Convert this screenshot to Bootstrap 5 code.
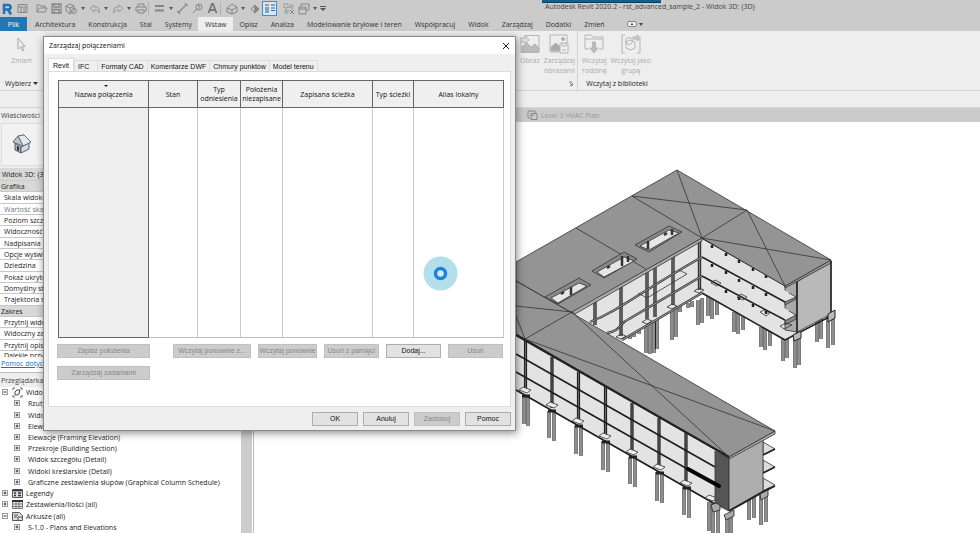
<!DOCTYPE html>
<html lang="pl">
<head>
<meta charset="utf-8">
<meta name="viewport" content="width=device-width, initial-scale=1">
<title>Autodesk Revit 2020.2</title>
<link href="https://cdn.jsdelivr.net/npm/bootstrap@5.3.0/dist/css/bootstrap.min.css" rel="stylesheet">
<style>
body{font:7px/9px "Open Sans","Noto Sans",sans-serif;color:#222;background:#fefefe;height:100vh;overflow:hidden}
button,a{font:inherit;color:inherit}
svg{display:block}
.plain{border:0;background:none;padding:0}
.ic{width:15px;height:15px;display:flex;align-items:center;justify-content:center;flex:none}
.ic svg,.ar svg{fill:none;stroke:#858585;stroke-width:1}
.ar{width:8px;height:15px;display:flex;align-items:center;justify-content:center;flex:none}
.ar svg{fill:#555;stroke:none}
.divider{width:4px;height:13px;border-left:1px solid #b2b2b2;flex:none}
.titlebar{background:#cbcbcb;height:17px}
.apptitle{left:545px;top:2px;color:#444}
.ribtabs{background:#cbcbcb;height:14px}
.ribtabs a{text-decoration:none;padding:3px 6px 2px 7px;color:#333;white-space:nowrap}
.ribtabs a.file{background:#1f77b8;color:#fff;width:27px;text-align:center;padding:3px 0;margin-right:1px}
.ribtabs a.on{background:#eee}
.ribbon{background:#eee;height:60px;border-bottom:1px solid #d3d3d3}
.ribbon .tool{color:#aaa;line-height:10px;white-space:nowrap}
.tool svg{fill:none;stroke:#b5b5b5;margin:3px auto 2px}
.pick{width:43px;padding-bottom:2px}
.linkgrp{width:535px;border-right:1px solid #d3d3d3;gap:4px;padding-right:2px}
.loadgrp{width:78px;padding-bottom:2px}
.optbar{background:#eee;height:17px;border-bottom:1px solid #d6d6d6}
.side{width:254px;border-right:1px solid #bbb;background:#fff}
.sidehead{height:14px;background:#eee;padding:3px 1px;color:#444}
.typebox{height:46px;background:#eee;padding:1px}
.typebox>div{border:1px solid #ddd;background:#f2f2f2;height:43px;padding:10px}
.typename{height:13px;background:#d9d9d9;padding:2px;border-bottom:1px solid #ccc}
.props{height:170px;display:grid;grid-auto-rows:1fr}
.props>div{padding:1px 4px 0;border-bottom:1px solid #c8c8c8;white-space:nowrap}
.props>.cat{background:#d8d8d8;padding-left:1px}
.cutrow{height:6px;overflow:hidden;padding:0 4px}
.helprow{height:16px;padding:2px 1px;border-bottom:1px solid #bbb}
.helprow a{color:#0a78c8}
.tree{height:146px;display:grid;grid-auto-rows:1fr}
.tree>div{display:flex;align-items:center;white-space:nowrap;min-height:0}
.tree .lv0{padding-left:2px;gap:3px}
.tree .lv1{padding-left:14px;gap:6px}
.tree svg{flex:none}
.track{width:11px;background:#ccc;margin-right:1px}
.viewtab{height:14px;background:#cbcbcb;color:#999;padding-left:273px;gap:3px}
.drawing{width:726px;height:411px}
.dlg{left:43px;top:36px;width:473px;max-width:100vw;background:#efefef;border:1px solid #8a8a8a;box-shadow:1px 2px 8px rgba(0,0,0,.45)}
.dlgtitle{height:17px;background:#fff;padding:0 5px;color:#111}
.dlgtabs,.pb{font-family:"Liberation Sans",Arial,sans-serif}
.dlgtabs{padding:4px 4px 0;height:17px}
.dlgtabs button{border:1px solid #ddd;border-bottom:0;background:#efefef;margin:2px 0 0 0;padding:0 3px;height:11px;color:#111}
.dlgtabs button+button+button{border-left:0}
.dlgtabs button.on{background:#fff;margin-top:0;height:13px}
.page{background:#fff;border:1px solid #dcdcdc;margin:0 4px;padding:8px 7px 26px 8px}
.links{table-layout:fixed;width:446px;border-collapse:collapse;color:#111;text-align:center;margin:0 0 6px 1px;border:1px solid #bbb}
.links th{height:27px;padding:0;border:1px solid #666;background:#efefef;font-weight:400}
.links td{height:230px;border-right:1px solid #ccc;border-bottom:1px solid #bbb}
.links td:first-child{background:#efefef;border:1px solid #666;border-top:0}
.push{display:grid;grid-template-columns:93px 1fr;column-gap:23px}
.row2{display:grid;grid-template-columns:78px 59px 55px 55px 55px;column-gap:7px}
.pb{height:14px;padding:0;border:1px solid #adadad;background:#e2e2e2;color:#111;line-height:10px;white-space:nowrap}
.pb:disabled{background:#ccc;border-color:#bfbfbf;color:#888}
.dlgfoot{padding:5px 4px 4px;gap:5px}
.dlgfoot .pb{width:46px}
.busy{left:423px;top:256px}
.strip{left:542px;top:0;width:119px;height:3px;background:#0d6196;border-bottom:1px solid #123a55}
</style>
<script src="https://cdn.jsdelivr.net/npm/bootstrap@5.3.0/dist/js/bootstrap.bundle.min.js"></script>
</head>
<body class="d-flex flex-column position-relative">
<header class="flex-shrink-0">
<div class="titlebar d-flex align-items-center position-relative">
<button class="plain ic" aria-label="Revit"><svg width="13" height="14"><path d="M3 12V3h4c3.500 0 3.500 4.500 0 4.500H4M7 7.500l3 5" stroke="#2270b5" stroke-width="2.500"/></svg></button>
<button class="plain ic me-1" aria-label="Strona główna"><svg width="11" height="11"><path d="M1 1.500h9v8H1zM1 4h9M4 4v5.500M6 6h3M6 8h3"/></svg></button>
<button class="plain ic" aria-label="Otwórz"><svg width="12" height="11"><path d="M1 9V2h3l1 1h4v2M1 9l2.500-4H11L9 9z"/></svg></button>
<button class="plain ic" aria-label="Zapisz"><svg width="11" height="11"><path d="M1 1h9v9H1zM3 1v3h5V1M3 10V6.500h5V10" stroke-width="1.300"/></svg></button>
<button class="plain ic" aria-label="Synchronizuj"><svg width="13" height="12"><path d="M1 3l4-2 4 2v5l-4 3-4-3zM1 3l4 2 4-2M5 5v6"/><circle cx="9" cy="8" r="2.500"/></svg></button>
<button class="plain ar" aria-label="Więcej"><svg width="4" height="3"><path d="M0 0h4L2 3z"/></svg></button>
<button class="plain ic" aria-label="Cofnij"><svg width="12" height="10"><path d="M5 1L1 4.500 5 8V6h2c3 0 3 2 3 3 1-3 0-6-3-6H5z" stroke="#999"/></svg></button>
<button class="plain ar" aria-label="Więcej"><svg width="4" height="3"><path d="M0 0h4L2 3z"/></svg></button>
<button class="plain ic" aria-label="Ponów"><svg width="12" height="10"><path d="M7 1l4 3.500L7 8V6H5C2 6 2 8 2 9 1 6 2 3 5 3h2z" stroke="#999"/></svg></button>
<button class="plain ar" aria-label="Więcej"><svg width="4" height="3"><path d="M0 0h4L2 3z"/></svg></button>
<button class="plain ic" aria-label="Drukuj"><svg width="12" height="11"><path d="M3 4V1h6v3M3 8H1V4h10v4H9M3 7h6v3H3z"/></svg></button>
<span class="divider"></span>
<button class="plain ic" aria-label="Zmierz"><svg width="11" height="9"><path d="M1 2h9M1 6.500h9" stroke-width="2"/></svg></button>
<button class="plain ar" aria-label="Więcej"><svg width="4" height="3"><path d="M0 0h4L2 3z"/></svg></button>
<button class="plain ic" aria-label="Wymiar"><svg width="11" height="11"><path d="M2 9l7-7M0 8l3 3M8 0l3 3" stroke-width="1.200"/></svg></button>
<button class="plain ic" aria-label="Oznacz"><svg width="11" height="11"><circle cx="7" cy="4" r="3"/><path d="M5 6L1 10M6 3l1-1v4"/></svg></button>
<button class="plain ic" aria-label="Tekst"><svg width="11" height="11"><path d="M1.500 10L5 1h1l3.500 9M3 7h5" stroke="#777" stroke-width="1.800"/></svg></button>
<span class="divider"></span>
<button class="plain ic" aria-label="Widok 3D"><svg width="12" height="12"><path d="M1 5l5-4 5 3v5L6 11 1 9zM1 5l5 2 5-3M6 7v4"/></svg></button>
<button class="plain ar" aria-label="Więcej"><svg width="4" height="3"><path d="M0 0h4L2 3z"/></svg></button>
<button class="plain ic" aria-label="Przekrój"><svg width="10" height="10"><path d="M1 5l4-4v8z"/><path d="M5 1l4 4-4 4z" fill="#888"/></svg></button>
<button class="plain ic" aria-label="Cienkie linie"><svg width="15" height="15"><rect x=".5" y=".5" width="14" height="14" fill="#d5e8f8" stroke="#3a8ddb"/><path d="M3 4h4M9 4h4M3 7h4M3 9h4M3 11h4" stroke="#555"/><path d="M9 7h4M9 9.500h4" stroke="#2270b5"/></svg></button>
<button class="plain ic ms-1" aria-label="Zamknij nieaktywne"><svg width="12" height="12"><path d="M1 1h4v4H1zM7 2h3v3H7zM2 7h3v3H2z" stroke-dasharray="2 1"/><path d="M7 7l4 4M11 7l-4 4"/></svg></button>
<button class="plain ic" aria-label="Przełącz okna"><svg width="12" height="12"><path d="M3 4V1h8v6H8M1 4h7v7H1zM1 6h7"/></svg></button>
<button class="plain ar" aria-label="Więcej"><svg width="4" height="3"><path d="M0 0h4L2 3z"/></svg></button>
<button class="plain ar" aria-label="Dostosuj"><svg width="6" height="6"><path d="M0 0h6v1H0zM0 2h6L3 5z"/></svg></button>
<span class="apptitle position-absolute">Autodesk Revit 2020.2 - rst_advanced_sample_2 - Widok 3D: {3D}</span>
<div class="strip position-absolute"></div>
</div>
<nav class="ribtabs d-flex">
<a class="file" href="#">Plik</a><a href="#">Architektura</a><a href="#">Konstrukcja</a><a href="#">Stal</a><a href="#">Systemy</a><a class="on" href="#">Wstaw</a><a href="#">Opisz</a><a href="#">Analiza</a><a href="#">Modelowanie bryłowe i teren</a><a href="#">Współpracuj</a><a href="#">Widok</a><a href="#">Zarządzaj</a><a href="#">Dodatki</a><a href="#">Zmień</a>
<button class="plain ms-3" aria-label="Minimalizuj wstążkę"><svg width="16" height="6"><rect x=".5" y=".5" width="9" height="5" rx="1.500" fill="#eee" stroke="#888"/><path d="M3.500 4L5 2l1.500 2zM12 2h4l-2 3z" fill="#444"/></svg></button>
</nav>
<div class="ribbon d-flex">
<div class="pick d-flex flex-column align-items-center justify-content-between">
<button class="plain tool" aria-label="Zmień"><svg width="10" height="20"><path d="M2 4v11l2.500-2 2 4 1.500-1-2-3.500H9z" stroke="#aaa"/></svg>Zmień</button>
<button class="plain d-flex align-items-center">Wybierz&nbsp;<svg width="5" height="3"><path d="M0 0h5L2.500 3z" fill="#333"/></svg></button>
</div>
<div class="linkgrp d-flex justify-content-end position-relative">
<button class="plain tool align-self-start"><svg width="20" height="20"><path d="M4 1.500h15v17H1V9"/><path d="M2 18v-5l5-4 4 4 4-3 4 4v4z" fill="#bbb"/><path d="M0 4h5V1.500L9 6 5 10V8H0z" fill="#ddd"/></svg>Obraz</button>
<button class="plain tool align-self-start"><svg width="20" height="20"><path d="M1 1h17v17H1z"/><path d="M2 17v-4l5-4 4 4v4z" fill="#aaa"/><circle cx="14" cy="5" r="1.500" fill="#aaa"/><path d="M11 9h8v10h-8zM13 9v3h4V9M13 16h4" fill="#eee"/></svg>Zarządzaj<br>obrazami</button>
<svg class="position-absolute bottom-0 end-0 mb-1 me-1" width="4" height="5"><path d="M0 1h3M1 2l2 2M3.500 2v2.500H1" stroke="#888" fill="none"/></svg>
</div>
<div class="loadgrp d-flex flex-column justify-content-between">
<div class="d-flex gap-1 ps-1">
<button class="plain tool"><svg width="20" height="20"><path d="M5 15H1V1h6l2 2h10v12h-4M1 5h18"/><path d="M8.500 8h3v6H14l-4 5-4-5h2.500z" fill="#bbb"/></svg>Wczytaj<br>rodzinę</button>
<button class="plain tool"><svg width="20" height="20"><path d="M4 1H1v18h3M16 19h3V5M5 8l4-2 5 2v6l-4 2-5-2z"/><circle cx="8" cy="7" r="3.500"/><path d="M12 3h4V1l3.500 3L16 7V5h-4z" fill="#ccc"/></svg>Wczytaj jako<br>grupę</button>
</div>
<div class="text-center">Wczytaj z biblioteki</div>
</div>
</div>
<div class="optbar"></div>
</header>
<div class="d-flex flex-grow-1 overflow-hidden">
<aside class="side flex-shrink-0">
<div class="sidehead">Właściwości</div>
<div class="typebox"><div><svg width="21" height="20" viewBox="0 0 21 20"><path d="M3 9l6 4v6l-6-3z" fill="#a9b1bf" stroke="#555d6d"/><path d="M9 13l8-4v6l-8 4z" fill="#d3dae6" stroke="#555d6d"/><path d="M1 8l5-6 6-1-5 6z" fill="#e4e9f0" stroke="#69717f"/><path d="M6 2l6-1 7 7-8 4z" fill="#e4e9f0" stroke="#69717f"/><path d="M1 8l5-6 5 10z" fill="#bec5d1" stroke="#69717f"/><path d="M5 12l2 1v4l-2-1z" fill="#333"/></svg></div></div>
<div class="typename">Widok 3D: {3D}</div>
<div class="props">
<div class="cat">Grafika</div><div>Skala widoku</div><div class="text-secondary">Wartość skali</div><div>Poziom szczegółu</div><div>Widoczność</div><div>Nadpisania</div><div>Opcje wyświetlania</div><div>Dziedzina</div><div>Pokaż ukryte</div><div>Domyślny styl</div><div>Trajektoria słońca</div><div class="cat">Zakres</div><div>Przytnij widok</div><div>Widoczny zakres</div><div>Przytnij opis</div>
</div>
<div class="cutrow">Dalekie przycięcie</div>
<div class="helprow"><a href="#">Pomoc dotycząca</a></div>
<div class="sidehead">Przeglądarka</div>
<div class="d-flex">
<div class="tree flex-grow-1" id="tree"></div>
<div class="track"></div>
</div>
</aside>
<main class="flex-grow-1 overflow-hidden">
<div class="viewtab d-flex align-items-center"><svg width="11" height="10"><path d="M3 8H1V1h7v2M4 3.500h6v6H4zM4 5.500h3" fill="none" stroke="#888"/></svg>Level 3 HVAC Plan</div>
<svg class="drawing" viewBox="254 122 726 411" role="img" aria-label="Model 3D">
<defs>
<path id="rear" d="M698 300v25M702 298v25M708 295v21M712 297v22M717 298v17M734 312v20M738 313v21M743 314v16M761 327v20M765 328v22M770 329v17M783 339v22M787 339v19M817 320v22M821 318v21M828 316v32M833 316v29M672 310v30M676 308v29M646 322v31M650 322v32M654 320v33M657 318v31M688 303v5M692 301v6M634 331v6M630 334v5M639 327v7M680 306v6"/>
<path id="rear2" d="M795 338v30M799 336v29"/>
<path id="front" d="M524 395v29M528 395v31M549 411v27M554 411v30M576 426v28M581 426v30M603 441v29M608 441v31M630 457v27M635 457v30M657 472v29M662 472v31M684 487v28M689 487v31M709 502v29M713 503v35M718 503v35M727 517v20M731 517v20M749 498v22M754 496v22M761 493v32M766 491v31"/>
</defs>
<g fill="none"><use href="#rear" stroke="#222" stroke-width="3.200"/><use href="#rear" stroke="#aaa" stroke-width="1.600"/></g>
<g stroke="#333" stroke-width=".8" stroke-linejoin="round">
<path d="M702 238L572 312 622 341 702 294 785 340 797 333V283z" fill="#e3e3e3" stroke="none"/>
<path d="M785 286l12-5v51l-12-2z" fill="#aaa"/>
<path d="M702 257l83 45 11-5-94-55zM702 276l83 44 11-5-94-55z" fill="#e3e3e3" stroke="none"/>
<path d="M785 302l11-5v2l-11 6zM785 321l11-6v4l-11 6z" fill="#888"/>
<path d="M797 282l34-21v53l-34 18z" fill="#b9b9b9"/>
<path d="M785 286l46-26v3l-46 25z" fill="#999"/>
<path d="M785 340l46-24M797 282v52M831 261v54" stroke="#222" stroke-width="1.500"/>
<path d="M702 238l84 48M702 257l83 45M702 276l83 44M702 293l83 47" fill="none" stroke="#222" stroke-width="1.600"/>
<path d="M796 297l-7-4M796 315l-7-4M711 283l4-3 6 3-4 3zM737 297l4-3 6 3-4 3zM760 312l4-2 6 3-4 3zM780 326l6-3 6 2-8 4z" fill="none"/>
<path d="M712 245v3M726 253v3M739 260v3M753 268v3M766 275v3M712 264v3M726 271v3M739 279v3M753 286v3M766 293v3M726 290v3M739 297v3M753 304v3M766 311v3" stroke="#222" stroke-width="2.500"/>
<path d="M699.500 240v50M673 256v49M655 266v51M647 271v48M621 286v50M595 301v24" stroke="#333" stroke-width="3.400"/>
<path d="M699.500 240v50M673 256v49M655 266v51M647 271v48M621 286v50M595 301v24" stroke="#999" stroke-width=".8"/>
<path d="M590 322c30-12 50-30 112-65M607 333c14-2 12-10 22-14l73-43M622 340l80-47" fill="none" stroke="#333" stroke-width="2.400"/>
<path d="M590 322c30-12 50-30 112-65M607 333c14-2 12-10 22-14l73-43M622 340l80-47" fill="none" stroke="#aaa" stroke-width=".9"/>
<path d="M638 293l9 5 40-24-8-4M667 307l5-3 5 2-5 3zM642 322l5-3 5 2-5 3zM616 337l5-3 5 2-5 3zM694 291l5-3 5 2-5 3z" fill="none"/>
<path d="M677 170l154 90-46 26-83-48-130 75-56-32V262z" fill="#949494"/>
<path d="M702 238L572 312l3 2 127-73z" fill="#aaa"/>
<path d="M632 196l115 14-45 28 129 22M632 196l70 42-25-68M747 210l38 76M576 228l70 41M516 281l56 32" fill="none"/>
<path d="M635 245l34-19 13 6-33 20zM592 271l32-19 13 7-33 19zM545 297l34-19 12 7-33 19z" fill="#888"/>
<path d="M640 246l29-16 10 3-30 17zM597 272l27-15 10 4-30 16zM551 298l28-15 8 3-29 17z" fill="#e6e6e6" stroke="#333"/>
<path d="M648 241v8M672 229v6M664 235l3-2M622 256v10M628 256v6M571 287v8M607 268l3-2M561 294l3-2" stroke="#333" stroke-width="2.500"/>
</g>
<g fill="none"><use href="#rear2" stroke="#222" stroke-width="3.200"/><use href="#rear2" stroke="#aaa" stroke-width="1.600"/></g>
<path d="M793 335l8-4v7l-7 3zM828 314l7-4v8l-7 4z" fill="#bbb" stroke="#222"/>
<g fill="none"><use href="#front" stroke="#222" stroke-width="3.200"/><use href="#front" stroke="#aaa" stroke-width="1.600"/></g>
<g stroke="#333" stroke-width=".8" stroke-linejoin="round">
<path d="M516 336l199 115v54L516 390z" fill="#e3e3e3" stroke="none"/>
<path d="M525.500 341v51M552 357v51M578.500 372v51M605.500 387v51M632 403v51M659 418v51M686 433v51" stroke="#222" stroke-width="3.200"/>
<path d="M525.500 341v51M552 357v51M578.500 372v51M605.500 387v51M632 403v51M659 418v51M686 433v51" stroke="#777" stroke-width=".8"/>
<path d="M516 354l199 113M516 372l175 99M516 390l199 114" fill="none" stroke="#1d1d1d" stroke-width="1.600"/>
<path d="M519 390l4-3 8 3-4 3zM546 405l4-3 8 3-4 3zM572 421l4-3 8 3-4 3zM599 436l4-3 8 3-4 3zM626 452l4-3 8 3-4 3zM653 467l4-3 8 3-4 3zM680 483l4-3 8 3-4 3zM705 498l4-3 8 3-4 3z" fill="#eee"/>
<path d="M522 396h8M548 411h8M575 426h8M602 442h8M629 457h8M656 473h8M683 488h8" stroke="#222" stroke-width="3"/>
<path d="M763 442l12 7-12 6zM763 460l12 7-12 6zM763 478l12 7-12 6z" fill="#ddd"/>
<path d="M763 455l12-6M763 473l12-6M763 492l12-6" stroke="#222" stroke-width="1.800"/>
<path d="M715 451l14 7v53l-14-7z" fill="#555"/>
<path d="M729 458l34-20v53l-34 20z" fill="#aeaeae"/>
<path d="M729 511l41-23" stroke="#222" stroke-width="2"/>
<path d="M688 469l31 17" stroke="#050505" stroke-width="4" stroke-linecap="round"/>
<path d="M516 281l56 32 203 118-46 26-204-118-9-5z" fill="#949494"/>
<path d="M729 457l46-26v3l-46 25z" fill="#aaa"/>
<path d="M516 335l213 122" stroke="#222" stroke-width="2.400"/>
<path d="M516 306l56 6 157 145M572 312l-47 27 250 92M516 316l9 23" fill="none"/>
<path d="M711 505l5-2 4 2v5l-7 2zM724 515l10-5v6l-8 4zM760 494l8-4v6l-7 4z" fill="#aaa" stroke="#222"/>
</g>
</svg>
</main>
</div>
<section class="dlg position-absolute" role="dialog" aria-labelledby="dt">
<div class="dlgtitle d-flex justify-content-between align-items-center"><span id="dt">Zarządzaj połączeniami</span><button class="plain" aria-label="Zamknij"><svg width="8" height="8"><path d="M1 1l6 6M7 1L1 7" stroke="#222"/></svg></button></div>
<div class="dlgtabs d-flex" role="tablist">
<button class="on px-1" role="tab">Revit</button><button class="pe-2" role="tab">IFC</button><button role="tab">Formaty CAD</button><button role="tab">Komentarze DWF</button><button role="tab">Chmury punktów</button><button role="tab">Model terenu</button>
</div>
<div class="page">
<table class="links">
<colgroup><col style="width:90px"><col style="width:49px"><col style="width:43px"><col style="width:42px"><col style="width:90px"><col style="width:41px"><col></colgroup>
<thead><tr><th class="position-relative">Nazwa połączenia<svg class="position-absolute top-0 start-50 mt-1" width="4" height="2"><path d="M0 0h4L2 2z" fill="#222"/></svg></th><th>Stan</th><th>Typ<br>odniesienia</th><th>Położenia<br>niezapisane</th><th>Zapisana ścieżka</th><th>Typ ścieżki</th><th>Alias lokalny</th></tr></thead>
<tbody><tr><td></td><td></td><td></td><td></td><td></td><td></td><td></td></tr></tbody>
</table>
<div class="push mb-2">
<button class="pb" disabled>Zapisz położenia</button>
<div class="row2"><button class="pb" disabled>Wczytaj ponownie z...</button><button class="pb" disabled>Wczytaj ponownie</button><button class="pb" disabled>Usuń z pamięci</button><button class="pb">Dodaj...</button><button class="pb" disabled>Usuń</button></div>
</div>
<div class="push"><button class="pb" disabled>Zarządzaj zadaniami</button></div>
</div>
<div class="dlgfoot d-flex justify-content-end"><button class="pb">OK</button><button class="pb">Anuluj</button><button class="pb" disabled>Zastosuj</button><button class="pb">Pomoc</button></div>
</section>
<svg class="busy position-absolute" width="35" height="35" aria-label="Trwa ładowanie"><circle cx="17.500" cy="17.500" r="17" fill="#b3deeb"/><circle cx="17.500" cy="17.500" r="5" fill="#d4eaf5" stroke="#1b83d8" stroke-width="3.500"/></svg>
<script>
const rows=[[0,'-','Widoki','v'],[1,'+','Rzuty'],[1,'+','Widoki 3D'],[1,'+','Elewacje'],[1,'+','Elewacje (Framing Elevation)'],[1,'+','Przekroje (Building Section)'],[1,'+','Widok szczegółu (Detail)'],[1,'+','Widoki kreślarskie (Detail)'],[1,'+','Graficzne zestawienia słupów (Graphical Column Schedule)'],[0,'+','Legendy','l'],[0,'+','Zestawienia/Ilości (all)','t'],[0,'-','Arkusze (all)','s'],[1,'+','S-1.0 - Plans and Elevations']];
const pics={v:'<path d="M1 3V1h2M8 1h2v2M10 8v2H8M3 10H1V8" stroke="#666"/><path d="M3 5l2-2h3l-1 4-2 1H3z" stroke="#444"/>',l:'<path d="M.500 1.500h10v8H.500z" fill="#ddd" stroke="#555"/><path d="M1 2.500h9M2 5h2M6 5h3M2 7.500h2M6 7.500h3" stroke="#333" stroke-width="1.500"/>',t:'<path d="M.500 1.500h10v8H.500zM.500 5h10M.500 7.500h10M4 3v6M7 3v6" fill="#eee" stroke="#777"/><path d="M0 2h11" stroke="#333" stroke-width="2"/>',s:'<path d="M.500 1.500h7l3 3v5h-10z" fill="#ddd" stroke="#555"/><path d="M2 4h4M2 6h3M6 9V6h4" stroke="#555"/>'};
document.getElementById('tree').innerHTML=rows.map(([lv,sign,name,pic])=>
`<div class="lv${lv}"><svg width="${lv?8:7}" height="7"><rect x=".5" y=".5" width="5" height="5" fill="#fff" stroke="#999"/><path d="M1.500 3h3${sign==='+'?'M3 1.500v3':''}" stroke="#334" fill="none"/></svg>${pic?`<svg width="11" height="11" fill="none">${pics[pic]}</svg>`:''}<span>${name}</span></div>`).join('');
</script>
</body>
</html>
